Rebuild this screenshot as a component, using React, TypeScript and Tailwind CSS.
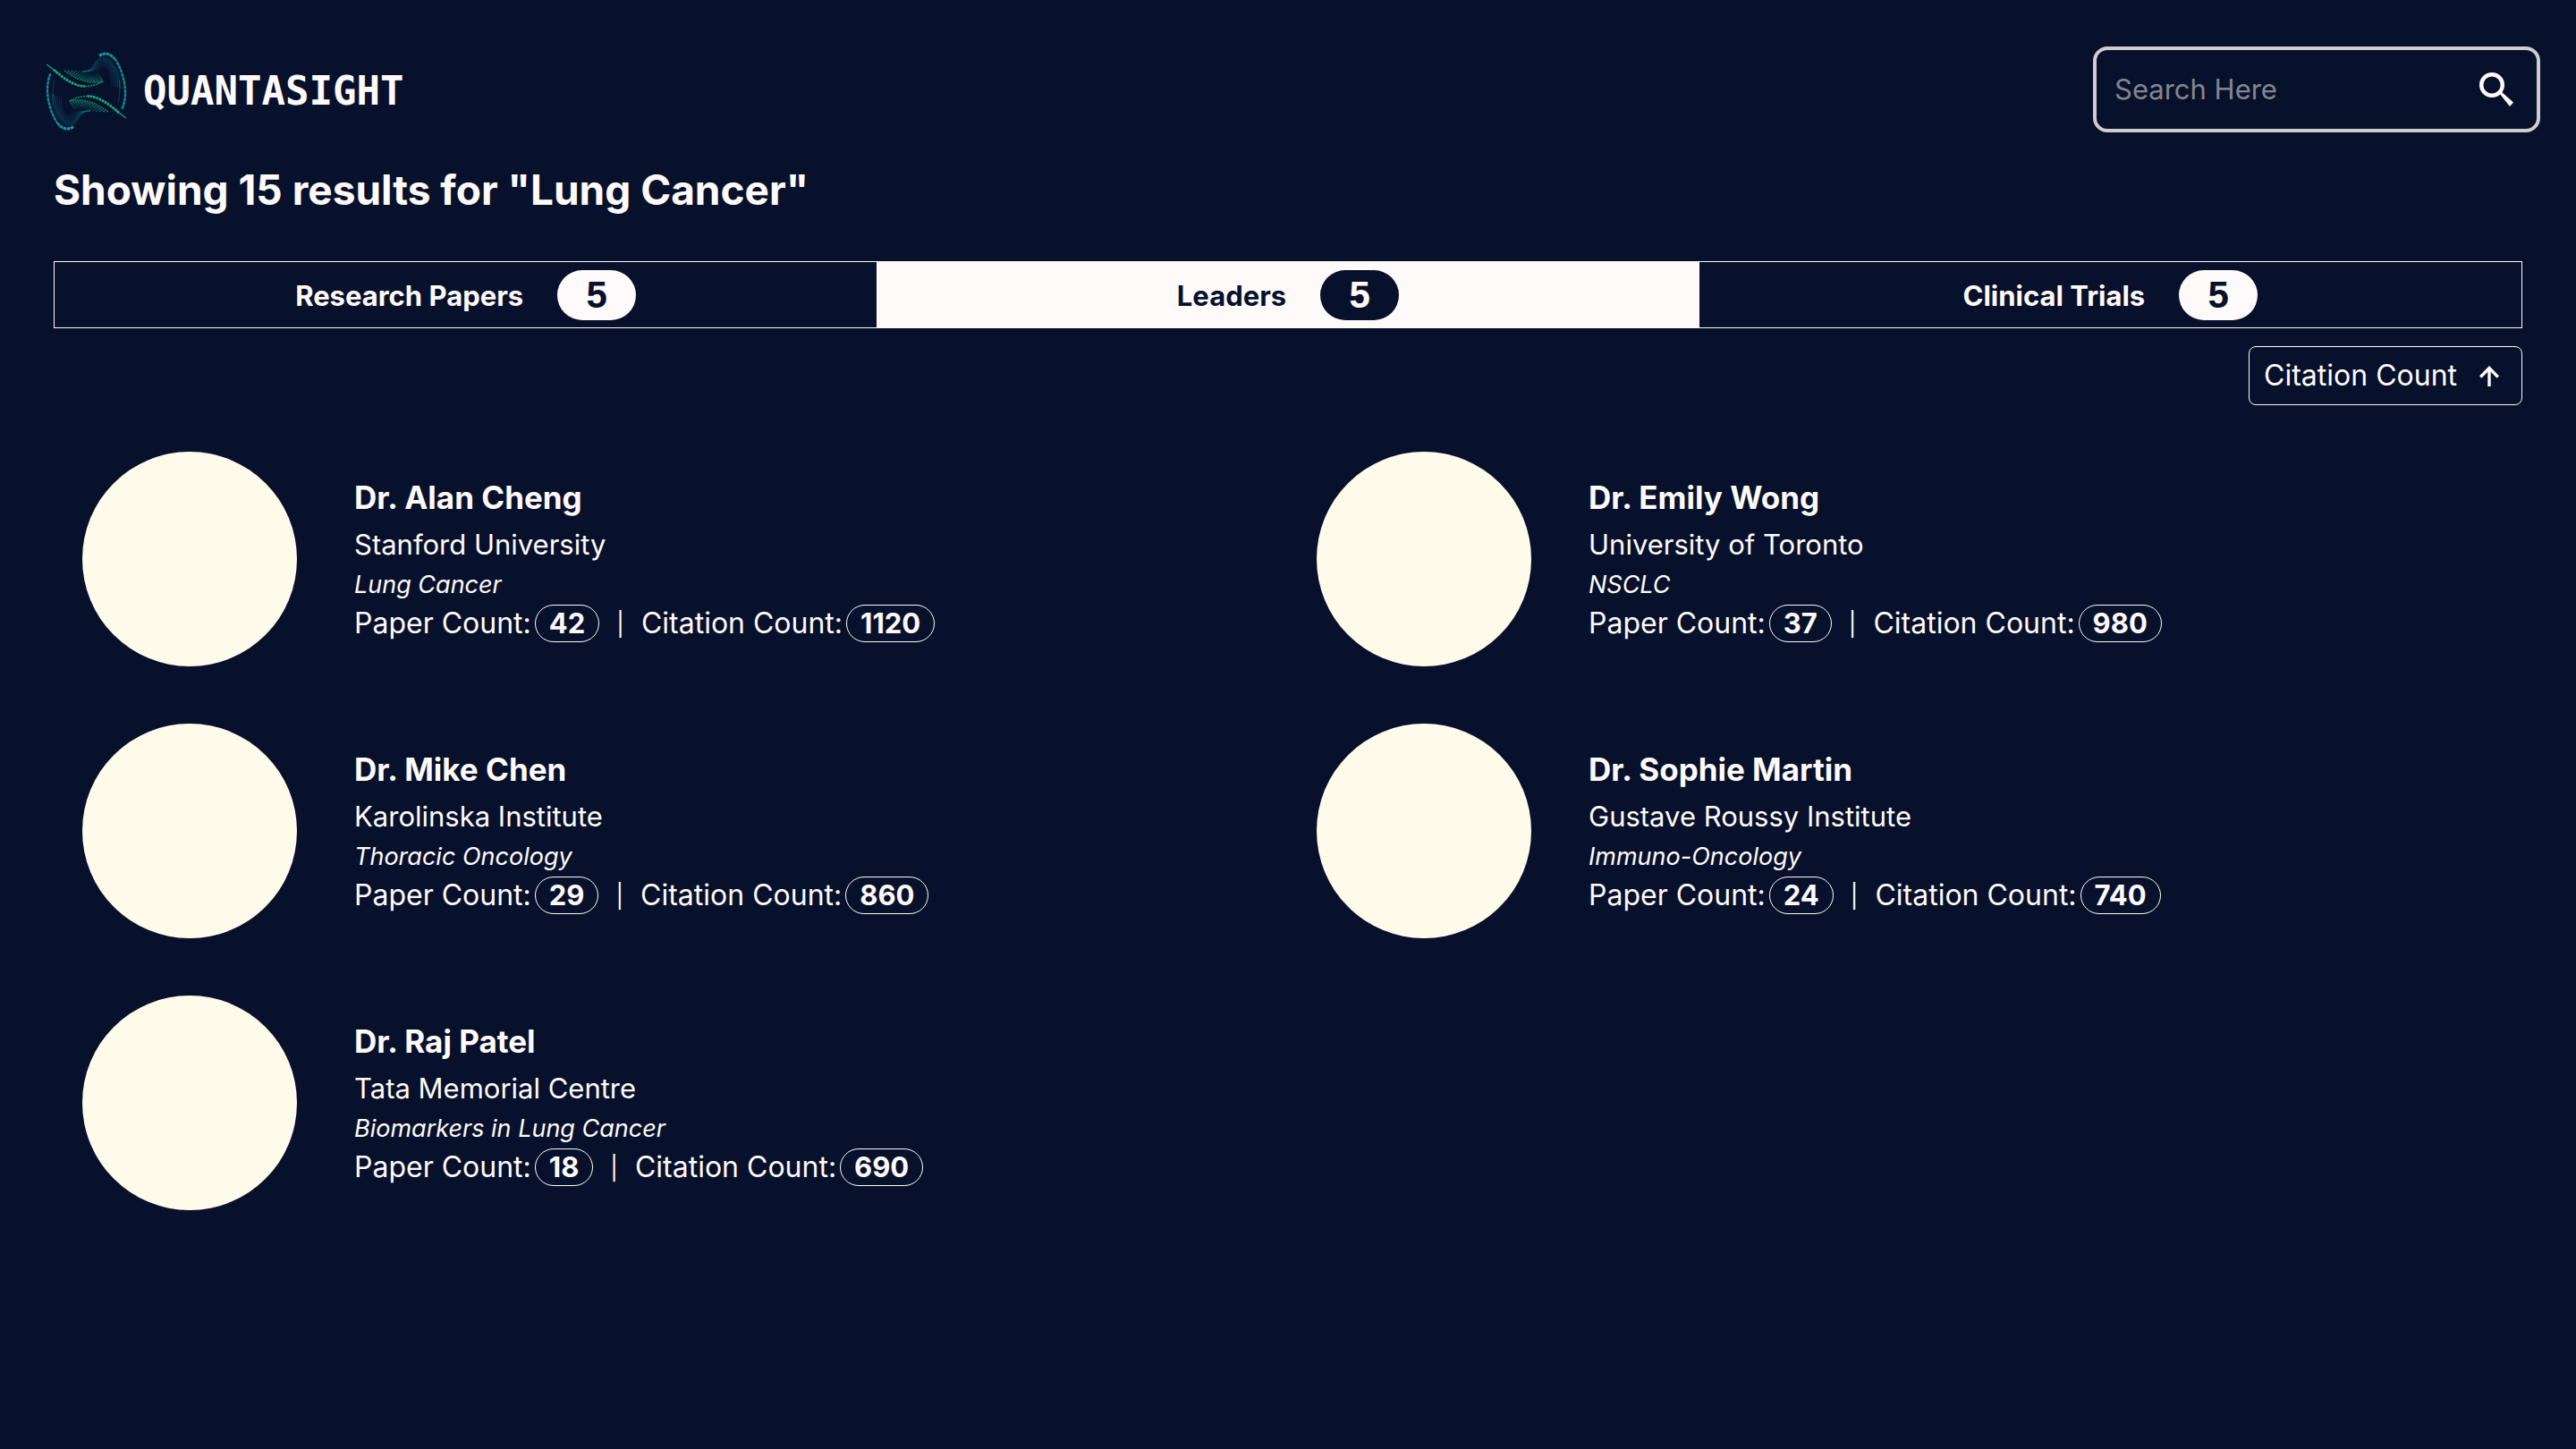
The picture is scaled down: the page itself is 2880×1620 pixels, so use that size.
import React from "react";

type Leader = {
  name: string;
  org: string;
  field: string;
  papers: number;
  citations: number;
};

const leaders: Leader[] = [
  { name: "Dr. Alan Cheng", org: "Stanford University", field: "Lung Cancer", papers: 42, citations: 1120 },
  { name: "Dr. Emily Wong", org: "University of Toronto", field: "NSCLC", papers: 37, citations: 980 },
  { name: "Dr. Mike Chen", org: "Karolinska Institute", field: "Thoracic Oncology", papers: 29, citations: 860 },
  { name: "Dr. Sophie Martin", org: "Gustave Roussy Institute", field: "Immuno-Oncology", papers: 24, citations: 740 },
  { name: "Dr. Raj Patel", org: "Tata Memorial Centre", field: "Biomarkers in Lung Cancer", papers: 18, citations: 690 },
];

const tabs = [
  { label: "Research Papers", count: 5, active: false },
  { label: "Leaders", count: 5, active: true },
  { label: "Clinical Trials", count: 5, active: false },
];

const strands = [0, 1, 2, 3, 4, 5];

/* One lobe of the twisted ribbon; the other is the same lobe turned by 180 degrees. */
function LogoHalf() {
  return (
    <g fill="none">
      <path d="M12 22L25 31.5" stroke="#12a37a" strokeWidth="1.3" />
      <path d="M20 28C32 38 42 46 55 46.5" stroke="#14a87c" strokeWidth="2.8" strokeDasharray="2.8 0.7" />
      <path d="M55 46.5C63 46.5 68 44.5 75 41" stroke="#0f8270" strokeWidth="1.6" strokeDasharray="2.2 0.8" />
      {strands.map((i) => (
        <path
          key={i}
          d={`M${32 + i * 4} 29C${43 + i * 3} ${36 - i} ${54 + i} ${45 - i * 2} ${76 - i} ${41 - i * 2}`}
          stroke="#11907a"
          strokeWidth={1.8 - i * 0.12}
          strokeDasharray="2 0.8"
          opacity={0.8 - i * 0.13}
        />
      ))}
      {strands.map((i) => (
        <path
          key={i}
          d={`M52 30C${64 + i} 30 ${64 + i} ${18 + i * 2} ${71 + i} ${13 + i * 2.2}C${80} ${9 + i * 3} ${96 - i * 2} ${24 + i * 2} ${97 - i * 2.6} ${50 - i}`}
          stroke="#108392"
          strokeWidth="1.2"
          strokeDasharray="2.4 0.5"
          opacity={i === 0 ? 0.15 : 0.6 - i * 0.08}
        />
      ))}
      <path d="M93 40C94.5 50 94 58 92 65" stroke="#108392" strokeWidth="1.1" opacity="0.4" />
      <path d="M71 12.5C77 8 83 10 88 15.5" stroke="#1496a3" strokeWidth="3" strokeDasharray="3.6 0.6" />
      <path d="M88 15.5C95 24 100.5 42 100 55C99.8 62 98.5 67 96.5 72" stroke="#128a98" strokeWidth="2.4" strokeDasharray="4 0.6" />
    </g>
  );
}

function Logo() {
  return (
    <svg viewBox="0 -5 110 110" className="size-[110px] shrink-0" aria-hidden="true">
      <LogoHalf />
      <g transform="rotate(180 56.5 52)">
        <LogoHalf />
      </g>
    </svg>
  );
}

function SearchIcon() {
  return (
    <svg viewBox="0 0 38 38" className="size-[38px]" aria-hidden="true">
      <circle cx="14" cy="14" r="11.8" fill="none" stroke="currentColor" strokeWidth="4.4" />
      <path d="M22 23L24.5 21.5L38 33.5L34 38Z" fill="currentColor" />
    </svg>
  );
}

function ArrowUpIcon() {
  return (
    <svg viewBox="0 0 22 23" className="h-[23px] w-[22px]" aria-hidden="true">
      <path d="M11 23V3M1.2 12.5L11 2.5L20.8 12.5" fill="none" stroke="currentColor" strokeWidth="3.4" />
    </svg>
  );
}

function Pill({ value }: { value: number }) {
  return (
    <span className="ml-1 flex h-[42px] items-center rounded-full border border-[#fffafa] px-[15px] text-[31px] font-bold">
      {value}
    </span>
  );
}

function LeaderCard({ leader }: { leader: Leader }) {
  return (
    <li className="flex items-center gap-16 p-8">
      <div className="size-60 shrink-0 rounded-full bg-[#fffbeb]" />
      <div className="flex flex-col">
        <h2 className="mb-0.5 text-[35px] leading-[54px] font-bold">{leader.name}</h2>
        <p className="text-[31px] leading-[48px]">{leader.org}</p>
        <p className="text-[27px] leading-[42px] italic">{leader.field}</p>
        <div className="mb-0.5 flex h-11 items-center text-[32px]">
          <span>Paper Count:</span>
          <Pill value={leader.papers} />
          <span className="mx-[19px] text-[26px]">|</span>
          <span>Citation Count:</span>
          <Pill value={leader.citations} />
        </div>
      </div>
    </li>
  );
}

export default function App() {
  return (
    <div className="min-h-screen bg-[#07112b] font-['Inter',sans-serif] text-[#fffafa]">
      <header className="flex items-center justify-between px-10 pt-[45px]">
        <a href="#" className="flex items-center gap-2.5">
          <Logo />
          <span className="pt-1 font-['DejaVu_Sans_Mono',monospace] text-[44px] font-bold">QUANTASIGHT</span>
        </a>
        <form className="flex h-24 w-[500px] items-center justify-between rounded-2xl border-4 border-[#cfcbd0] pr-[26px] pl-5">
          <input
            type="text"
            aria-label="Search"
            placeholder="Search Here"
            className="w-[360px] bg-transparent text-[31px] outline-none placeholder:text-[#83858f]"
          />
          <button type="button" aria-label="Submit search">
            <SearchIcon />
          </button>
        </form>
      </header>
      <main className="px-[60px]">
        <h1 className="mt-6 text-[46px] leading-[66px] font-bold">Showing 15 results for "Lung Cancer"</h1>
        <div role="tablist" className="mt-[47px] grid grid-cols-3 border border-[#fffafa]">
          {tabs.map((tab) => (
            <button
              key={tab.label}
              role="tab"
              aria-selected={tab.active}
              className="group flex h-[73px] items-center justify-center gap-[38px] text-[31px] font-bold aria-selected:bg-[#fffafa] aria-selected:text-[#07112b]"
            >
              <span className="pt-1">{tab.label}</span>
              <span className="flex h-14 w-[88px] items-center justify-center rounded-full bg-[#fffafa] font-['Liberation_Sans',sans-serif] text-[42px] text-[#07112b] group-aria-selected:bg-[#07112b] group-aria-selected:text-[#fffafa]">
                {tab.count}
              </span>
            </button>
          ))}
        </div>
        <div className="mt-5 flex justify-end">
          <button className="flex h-[66px] items-center gap-[25px] rounded-lg border border-[#fffafa] pr-[25px] pl-4 text-[32px]">
            Citation Count
            <ArrowUpIcon />
          </button>
        </div>
        <ul className="mt-5 grid grid-cols-2">
          {leaders.map((leader) => (
            <LeaderCard key={leader.name} leader={leader} />
          ))}
        </ul>
      </main>
    </div>
  );
}
